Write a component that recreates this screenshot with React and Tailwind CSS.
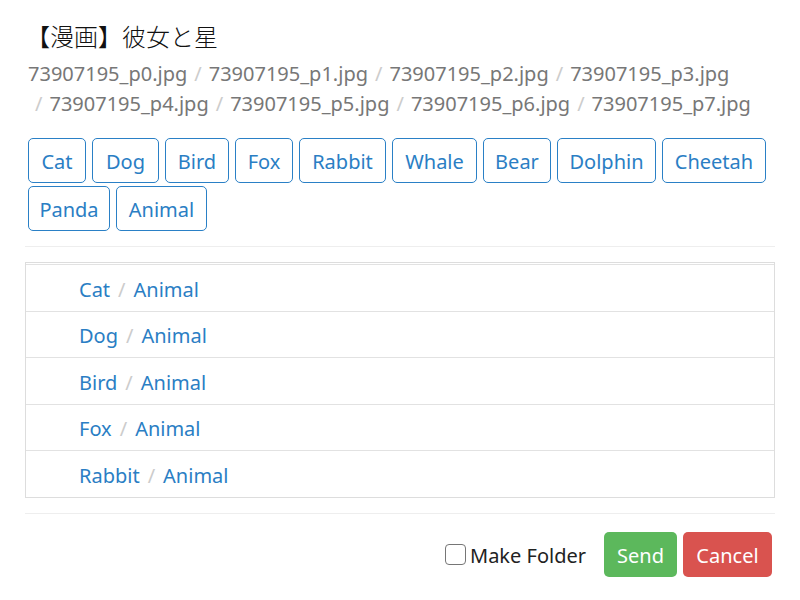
import React from "react";

const files = [0, 1, 2, 3, 4, 5, 6, 7].map((n) => `73907195_p${n}.jpg`);
const tags = [
  ["Cat", "w-[58px]"],
  ["Dog", "w-[67px]"],
  ["Bird", "w-[64px]"],
  ["Fox", "w-[58px]"],
  ["Rabbit", "w-[87px]"],
  ["Whale", "w-[85px]"],
  ["Bear", "w-[68px]"],
  ["Dolphin", "w-[99px]"],
  ["Cheetah", "w-[104px]"],
  ["Panda", "w-[82px]"],
  ["Animal", "w-[91px]"],
];
const rows = ["Cat", "Dog", "Bird", "Fox", "Rabbit"];

export default function App() {
  return (
    <div
      className="w-[800px] h-[600px] bg-white px-[28px] pt-[20px] text-[20px] text-[#333]"
      style={{ fontFamily: '"Noto Sans", "Noto Sans CJK JP", sans-serif' }}
    >
      {/* title */}
      <h1 className="text-[24px] leading-[34px] font-light text-[#111] -ml-[2px]">【漫画】彼女と星</h1>

      {/* file breadcrumb */}
      <div className="mt-[5px] leading-[30px] text-[#777]">
        {files.map((f, i) => (
          <span key={f} className="inline-block whitespace-nowrap">
            {i > 0 && <span className="text-[#ccc] px-[7px]">/</span>}
            {f}
          </span>
        ))}
      </div>

      {/* tag buttons */}
      <div className="mt-[19px] flex flex-wrap gap-x-[6px] gap-y-[3px]">
        {tags.map(([t, w]) => (
          <button
            key={t}
            className={`${w} h-[45px] pt-[2px] border border-[#2a80c6] rounded-[5px] text-[#2a7ec4] leading-none bg-white`}
          >
            {t}
          </button>
        ))}
      </div>

      <div className="-mx-[3px] mt-[15px] border-t border-[#eee]" />

      {/* result list */}
      <div className="-mx-[3px] mt-[15px] border border-[#ddd] pt-px">
        {rows.map((r) => (
          <div key={r} className="h-[46.5px] flex items-center pl-[53px] pt-[4px] border-t border-[#e2e2e2]">
            <span className="text-[#2a7ec4]">{r}</span>
            <span className="text-[#ccc] px-[8px]">/</span>
            <span className="text-[#2a7ec4]">Animal</span>
          </div>
        ))}
      </div>

      <div className="-mx-[3px] mt-[15px] border-t border-[#eee]" />

      {/* footer */}
      <div className="mt-[18px] flex items-center justify-end">
        <label className="flex items-center text-[#222]">
          <span className="w-[21px] h-[21px] rounded-[4px] border border-[#767676] bg-white" />
          <span className="ml-[4px] pt-[3px]">Make Folder</span>
        </label>
        <button className="ml-[18px] h-[45px] w-[73px] pt-[4px] rounded-[5px] bg-[#5cb85c] text-white">Send</button>
        <button className="ml-[6px] h-[45px] w-[89px] pt-[4px] rounded-[5px] bg-[#d9534f] text-white">Cancel</button>
      </div>
    </div>
  );
}
